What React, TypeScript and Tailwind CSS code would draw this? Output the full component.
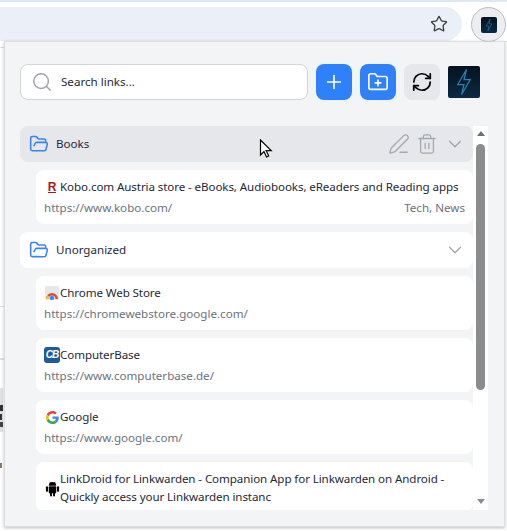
import React from 'react';
import { Search, Plus, FolderPlus, RefreshCw, FolderOpen, PenLine, Trash2, ChevronDown, Star } from 'lucide-react';

const sans = { fontFamily: '"Noto Sans", sans-serif' };

function Bolt({ size }: { size: number }) {
	return (
		<div
			className="flex items-center justify-center rounded-[2px] bg-gradient-to-b from-[#04121f] to-[#0a2a44]"
			style={{ width: size, height: size }}
		>
			<svg viewBox="0 0 24 24" width={size - 2} height={size - 2} fill="none" stroke="#2a7fb0" strokeWidth="1" strokeLinejoin="miter">
				<path d="M14 2 7 14h5l-2 8 7-12h-5z" />
			</svg>
		</div>
	);
}

function FolderRow({ name, active }: { name: string; active?: boolean }) {
	return (
		<div className={`flex h-9 shrink-0 items-center rounded-lg pl-[9px] pr-[7px] ${active ? 'bg-[#e5e7eb]' : 'bg-white'}`}>
			<FolderOpen size={20} strokeWidth={1.9} className="text-[#3b82f6]" />
			<span className="ml-[7px] flex-1 text-[11.6px] text-[#1f2937]">{name}</span>
			{active && (
				<div className="mr-[6px] flex items-center gap-[6px] text-[#a3a8b2]">
					<PenLine size={22} strokeWidth={1.4} />
					<Trash2 size={22} strokeWidth={1.4} />
				</div>
			)}
			<ChevronDown size={22} strokeWidth={1.3} className="text-[#9ca3af]" />
		</div>
	);
}

function LinkRow({ icon, title, url, tags }: { icon: React.ReactNode; title: string; url: string; tags?: string }) {
	return (
		<div className="ml-4 h-[54px] shrink-0 rounded-lg bg-white px-2 pt-[8px]">
			<div className="flex h-[18px] items-center text-[11.6px] tracking-[-0.1px] text-[#1f2937]">
				<span className="flex w-4 shrink-0 justify-center">{icon}</span>
				<span className="whitespace-nowrap">{title}</span>
			</div>
			<div className="mt-[3px] flex justify-between text-[11.6px] leading-[18px] text-[#6b7280]">
				<span>{url}</span>
				{tags && <span>{tags}</span>}
			</div>
		</div>
	);
}

function GoogleIcon() {
	return (
		<svg viewBox="0 0 48 48" width="13" height="13">
			<path fill="#EA4335" d="M24 9.500c3.500 0 6.700 1.300 9.100 3.400l6.800-6.800C35.800 2.400 30.200 0 24 0 14.600 0 6.500 5.400 2.600 13.200l7.900 6.100C12.400 13.600 17.700 9.500 24 9.500z" />
			<path fill="#4285F4" d="M47 24.500c0-1.600-.1-3.100-.4-4.500H24v9h12.900c-.6 3-2.200 5.500-4.700 7.200l7.600 5.900C44.300 37.900 47 31.800 47 24.500z" />
			<path fill="#FBBC05" d="M10.500 28.700c-.5-1.400-.8-3-.8-4.700s.3-3.300.8-4.700l-7.900-6.100C.9 16.500 0 20.100 0 24s.9 7.500 2.600 10.800z" />
			<path fill="#34A853" d="M24 48c6.500 0 11.900-2.100 15.800-5.800l-7.600-5.900c-2.100 1.400-4.900 2.300-8.200 2.300-6.300 0-11.600-4.200-13.500-9.900l-7.900 6.100C6.500 42.600 14.600 48 24 48z" />
		</svg>
	);
}

function ChromeStoreIcon() {
	return (
		<svg viewBox="0 0 14 14" width="14" height="14">
			<rect width="14" height="14" fill="#e8e8e8" />
			<path d="M1 13a6 6 0 0 1 12 0h-2.500a3.500 3.500 0 0 0-7 0z" fill="#d9483b" />
			<path d="M1 13a6 6 0 0 1 1.500-4l2.500 2.500a3 3 0 0 0-1 1.500z" fill="#f2c230" />
			<circle cx="7" cy="12" r="2.200" fill="#4285f4" />
		</svg>
	);
}

function CbIcon() {
	return (
		<div className="flex h-4 w-4 items-center justify-center rounded-[3px] bg-[#1f5a9c] text-[10px] font-bold italic leading-none tracking-[-1px] text-white" style={{ fontFamily: '"Liberation Sans", sans-serif' }}>
			CB
		</div>
	);
}

function KoboIcon() {
	return (
		<span className="border-b-[1.5px] border-[#b4141e] text-[12px] font-bold leading-[10px] text-[#b4141e]" style={{ fontFamily: '"Liberation Sans", sans-serif' }}>
			R
		</span>
	);
}

function AndroidIcon() {
	return (
		<svg viewBox="0 0 16 18" width="15" height="17" fill="#000">
			<path d="M4 6a4 4 0 0 1 8 0z" />
			<path d="M5.300 1.500 4.800 2l1 1.400.4-.3zM10.700 1.500l.5.500-1 1.400-.4-.3z" />
			<rect x="4" y="6.600" width="8" height="7.400" rx="1" />
			<rect x="1" y="6.600" width="2.200" height="6" rx="1.100" />
			<rect x="12.800" y="6.600" width="2.200" height="6" rx="1.100" />
			<rect x="5.300" y="13" width="2.100" height="4.500" rx="1" />
			<rect x="8.600" y="13" width="2.100" height="4.500" rx="1" />
		</svg>
	);
}

function App() {
	return (
		<div className="relative h-[531px] w-[507px] overflow-hidden bg-white" style={sans}>
			<div className="h-[2px] bg-[#dfe7f3]" />
			<div className="flex h-[39px] items-start">
				<div className="mt-[5px] flex h-[34px] w-[462px] items-center justify-end rounded-r-[17px] bg-[#ebf0f8] pr-[14px]">
					<Star size={18} strokeWidth={1.8} className="text-[#3c4043]" />
				</div>
				<div className="relative z-10 ml-[9px] mt-[5px] flex h-[35px] w-[35px] items-center justify-center rounded-full border border-[#bdbdbd] bg-[#eceef2]">
					<Bolt size={16} />
				</div>
			</div>

			{/* bits of the page behind the popup */}
			<div className="absolute left-0 top-[47px] h-[1px] w-[4px] bg-[#dcdcdc]" />
			<div className="absolute left-[505px] top-[41px] h-[1px] w-[2px] bg-[#dcdcdc]" />
			<div className="absolute left-0 top-[306px] h-[1px] w-[4px] bg-[#e4e4e4]" />
			<div className="absolute left-0 top-[358px] h-[2px] w-[4px] bg-[#e0e0e0]" />
			<div className="absolute left-0 top-[388px] h-[44px] w-[3px] bg-[#e2e2e2]" />
			<div className="absolute left-0 top-[405px] h-[6px] w-[3px] bg-[#333]" />
			<div className="absolute left-0 top-[414px] h-[6px] w-[2px] bg-[#333]" />
			<div className="absolute left-0 top-[422px] h-[5px] w-[3px] bg-[#444]" />
			<div className="absolute left-0 top-[463px] h-[5px] w-[2px] bg-[#8a7a6a]" />

			{/* popup */}
			<div className="absolute left-[4px] top-[41px] flex h-[486px] w-[501px] flex-col border border-[#dcdee1] bg-[#f3f4f6] pl-[15px] pr-[7px] pt-[22px] shadow-[0_1px_3px_rgba(0,0,0,0.25)]">
				<div className="flex items-center">
					<div className="flex h-9 w-[288px] items-center rounded-lg border border-[#d1d5db] bg-white pl-[10px]">
						<Search size={22} strokeWidth={1.6} className="text-[#9ca3af]" />
						<span className="ml-[8px] text-[11.6px] text-[#1f2937]">Search links...</span>
					</div>
					<button className="ml-2 flex h-9 w-9 items-center justify-center rounded-lg bg-[#2f80fb] text-white">
						<Plus size={22} strokeWidth={1.8} />
					</button>
					<button className="ml-2 flex h-9 w-9 items-center justify-center rounded-lg bg-[#2f80fb] text-white">
						<FolderPlus size={22} strokeWidth={1.8} />
					</button>
					<button className="ml-2 flex h-9 w-9 items-center justify-center rounded-lg bg-[#e5e7eb] text-black">
						<RefreshCw size={22} strokeWidth={1.9} />
					</button>
					<div className="ml-2">
						<Bolt size={32} />
					</div>
				</div>

				<div className="mt-[26px] flex min-h-0">
					<div className="flex h-[384px] w-[453px] flex-col gap-2 overflow-hidden">
						<FolderRow name="Books" active />
						<LinkRow icon={<KoboIcon />} title="Kobo.com Austria store - eBooks, Audiobooks, eReaders and Reading apps" url="https://www.kobo.com/" tags="Tech, News" />
						<FolderRow name="Unorganized" />
						<LinkRow icon={<ChromeStoreIcon />} title="Chrome Web Store" url="https://chromewebstore.google.com/" />
						<LinkRow icon={<CbIcon />} title="ComputerBase" url="https://www.computerbase.de/" />
						<LinkRow icon={<GoogleIcon />} title="Google" url="https://www.google.com/" />
						<div className="ml-4 flex shrink-0 items-center rounded-lg bg-white px-2 pb-[6px] pt-[8px]">
							<span className="flex w-4 shrink-0 justify-center"><AndroidIcon /></span>
							<span className="text-[11.6px] leading-[18px] tracking-[-0.1px] text-[#1f2937]">
								LinkDroid for Linkwarden - Companion App for Linkwarden on Android -<br />
								Quickly access your Linkwarden instanc
							</span>
						</div>
					</div>
					<div className="flex h-[384px] w-[15px] flex-col items-center bg-white">
						<div className="mt-[5px] h-0 w-0 border-x-[4px] border-b-[5px] border-x-transparent border-b-[#6e6e6e]" />
						<div className="mt-[8px] h-[246px] w-[9px] rounded-full bg-[#8c8c8c]" />
						<div className="mt-auto mb-[6px] h-0 w-0 border-x-[4px] border-t-[5px] border-x-transparent border-t-[#8c8c8c]" />
					</div>
				</div>
			</div>

			{/* mouse pointer */}
			<svg className="absolute left-[259px] top-[139px]" width="15" height="20" viewBox="0 0 15 20">
				<path d="M1.500 1v15l3.500-3.500 2.500 5.500 2.200-1-2.500-5.300h5z" fill="#fff" stroke="#000" strokeWidth="1.200" />
			</svg>
		</div>
	);
}

export default App;
